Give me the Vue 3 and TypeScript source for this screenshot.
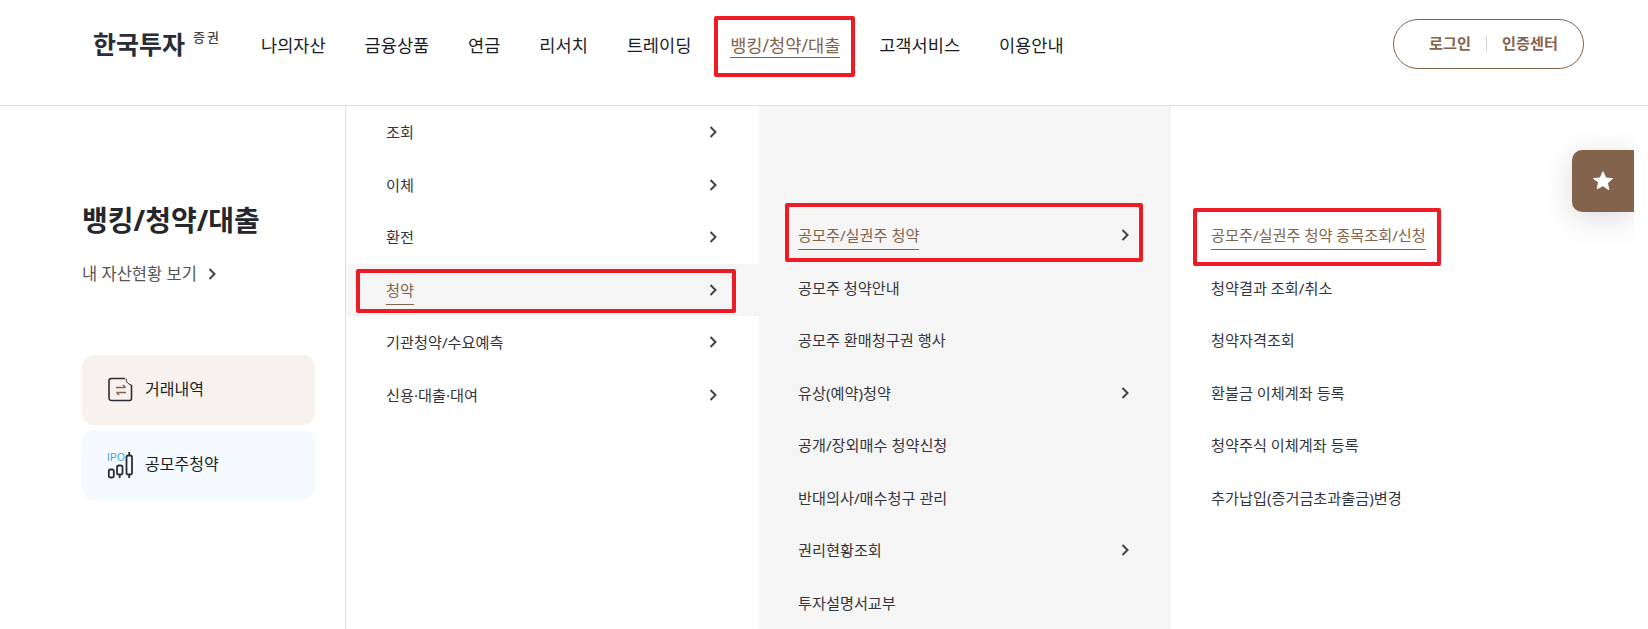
<template>
  <div class="page">
    <!-- 상단 헤더 -->
    <header class="header">
      <div class="logo">한국투자<sup>증권</sup></div>
      <nav class="gnb">
        <a v-for="item in gnbItems" :key="item" class="gnb-item" :class="{ active: item === activeGnb }">
          <span>{{ item }}</span>
          <i v-if="item === activeGnb" class="mark mark-gnb"></i>
        </a>
      </nav>
      <div class="user-box">
        <span>로그인</span>
        <i class="user-sep"></i>
        <span>인증센터</span>
      </div>
    </header>

    <!-- 전체 메뉴 -->
    <main class="menu">
      <aside class="side">
        <h2 class="side-title">뱅킹/청약/대출</h2>
        <a class="side-link">내 자산현황 보기
          <svg class="arrow" width="10" height="12" viewBox="0 0 10 12"><path d="M2.500 1 7.500 6l-5 5" /></svg>
        </a>
        <div class="quick quick-history">
          <svg width="26" height="26" viewBox="0 0 26 26" fill="none">
            <path d="M18 1.500H4.500A2.500 2.500 0 0 0 2 4v17a2.500 2.500 0 0 0 2.500 2.500h18a2 2 0 0 0 2-2V8" stroke="#2b2d36" stroke-width="1.600" />
            <path d="M19 1.800c.3 3.300 1.800 5.300 5.500 6.200" stroke="#2b2d36" stroke-width="1" />
            <path d="M9 10.500h9.500M16 8l2.500 2.500M19 15.500H9.500M12 18l-2.500-2.500" stroke="#84634c" stroke-width="1.600" />
          </svg>
          <span class="quick-text">거래내역</span>
        </div>
        <div class="quick quick-ipo">
          <svg width="26" height="28" viewBox="0 0 26 28" fill="none">
            <text x="0" y="10" class="ipo-text">IPO</text>
            <rect x="1.800" y="18.500" width="5" height="8" rx="1.500" stroke="#2b2d36" stroke-width="1.800" />
            <rect x="10" y="14.500" width="5.500" height="9" rx="1.800" stroke="#2b2d36" stroke-width="1.800" />
            <path d="M12.700 23.500v3.500" stroke="#2b2d36" stroke-width="1.800" />
            <rect x="19.500" y="4.500" width="5.500" height="19" rx="1.800" stroke="#2b2d36" stroke-width="1.800" />
            <path d="M22.200 1v3.500M22.200 23.500V27" stroke="#2b2d36" stroke-width="1.800" />
          </svg>
          <span class="quick-text">공모주청약</span>
        </div>
      </aside>

      <ul class="col col-depth2">
        <li v-for="item in depth2" :key="item.name" class="row" :class="{ selected: item.name === '청약' }">
          <span class="label" :class="{ current: item.name === '청약' }">{{ item.name }}</span>
          <svg v-if="item.more" class="arrow" width="10" height="12" viewBox="0 0 10 12"><path d="M2.500 1 7.500 6l-5 5" /></svg>
          <i v-if="item.name === '청약'" class="mark mark-depth2"></i>
        </li>
      </ul>

      <ul class="col col-depth3">
        <li v-for="(item, idx) in depth3" :key="item.name" class="row">
          <span class="label" :class="{ current: idx === 0 }">{{ item.name }}</span>
          <svg v-if="item.more" class="arrow" width="10" height="12" viewBox="0 0 10 12"><path d="M2.500 1 7.500 6l-5 5" /></svg>
          <i v-if="idx === 0" class="mark mark-depth3"></i>
        </li>
      </ul>

      <ul class="col col-depth4">
        <li v-for="(item, idx) in depth4" :key="item" class="row">
          <span class="label" :class="{ current: idx === 0 }">{{ item }}</span>
          <i v-if="idx === 0" class="mark mark-depth4"></i>
        </li>
      </ul>

      <!-- 즐겨찾기 탭 -->
      <button class="fav" aria-label="즐겨찾기">
        <svg width="22" height="22" viewBox="0 0 24 24"><path d="M12 1.800l3.100 6.800 7.200.8-5.400 4.900 1.500 7.300L12 17.100l-6.400 3.500 1.500-7.300L1.700 9.400l7.200-.8z" fill="#fff" stroke="#fff" stroke-linejoin="round" /></svg>
      </button>
    </main>
  </div>
</template>

<script setup lang="ts">
interface MenuItem {
  name: string
  more: boolean
}

const gnbItems = ['나의자산', '금융상품', '연금', '리서치', '트레이딩', '뱅킹/청약/대출', '고객서비스', '이용안내']
const activeGnb = '뱅킹/청약/대출'

const depth2: MenuItem[] = [
  { name: '조회', more: true },
  { name: '이체', more: true },
  { name: '환전', more: true },
  { name: '청약', more: true },
  { name: '기관청약/수요예측', more: true },
  { name: '신용·대출·대여', more: true }
]

const depth3: MenuItem[] = [
  { name: '공모주/실권주 청약', more: true },
  { name: '공모주 청약안내', more: false },
  { name: '공모주 환매청구권 행사', more: false },
  { name: '유상(예약)청약', more: true },
  { name: '공개/장외매수 청약신청', more: false },
  { name: '반대의사/매수청구 관리', more: false },
  { name: '권리현황조회', more: true },
  { name: '투자설명서교부', more: false }
]

const depth4 = [
  '공모주/실권주 청약 종목조회/신청',
  '청약결과 조회/취소',
  '청약자격조회',
  '환불금 이체계좌 등록',
  '청약주식 이체계좌 등록',
  '추가납입(증거금초과출금)변경'
]
</script>

<style>
html,
body {
  margin: 0;
  background: #fff;
  overflow: hidden;
}
</style>

<style scoped>
.page {
  width: 1648px;
  height: 629px;
  overflow: hidden;
  font-family: "Noto Sans", "Noto Sans CJK KR", sans-serif;
  color: #2b2d36;
  background: #fff;
}

/* 헤더 */
.header {
  height: 106px;
  box-sizing: border-box;
  display: flex;
  align-items: flex-start;
  padding: 0 64px 0 93px;
  border-bottom: 1px solid #e0e0e0;
}

.logo {
  width: 168px;
  margin-top: 27px;
  font-size: 25px;
  font-weight: 700;
  line-height: 34px;
  color: #2b2d36;
  white-space: nowrap;
}

.logo sup {
  margin-left: 8px;
  font-size: 13px;
  font-weight: 500;
  letter-spacing: 2px;
  line-height: 0;
  vertical-align: 12px;
  color: #444;
}

.gnb {
  display: flex;
  flex: 1;
  gap: 38.800px;
  margin-top: 33px;
}

.gnb-item {
  position: relative;
  font-size: 17.600px;
  line-height: 24px;
  font-weight: 400;
  color: #1c1e26;
  white-space: nowrap;
}

.gnb-item.active span {
  color: #84634c;
  border-bottom: 1px solid #84634c;
  padding-bottom: 0;
}

.user-box {
  width: 191px;
  height: 50px;
  margin-top: 19px;
  box-sizing: border-box;
  display: flex;
  align-items: center;
  justify-content: center;
  gap: 15px;
  padding: 0 0 5px 10px;
  border: 1px solid #84634c;
  border-radius: 25px;
  font-size: 15.200px;
  font-weight: 700;
  color: #84634c;
}

.user-sep {
  width: 1px;
  height: 15px;
  margin-top: 4px;
  background: #d9d2cc;
}

/* 메뉴 본문 */
.menu {
  position: relative;
  display: flex;
  height: 523px;
  margin-right: 14px;
  overflow: hidden;
}

.side {
  width: 346px;
  flex: none;
  box-sizing: border-box;
  padding: 95px 0 0 82px;
  border-right: 1px solid #e0e0e0;
}

.side-title {
  margin: 0;
  font-size: 28px;
  line-height: 38px;
  font-weight: 700;
  color: #26272c;
}

.side-link {
  display: flex;
  align-items: center;
  gap: 10px;
  margin-top: 24px;
  font-size: 16.500px;
  line-height: 22px;
  color: #555;
}

.quick {
  width: 233px;
  height: 70px;
  box-sizing: border-box;
  display: flex;
  align-items: center;
  gap: 12px;
  padding-left: 25px;
  border-radius: 12px;
  font-size: 16px;
  color: #1c1e26;
}

.quick-text {
  margin-top: -5px;
}

.quick-history {
  margin-top: 70px;
  background: #f7f2ee;
}

.quick-ipo {
  margin-top: 5px;
  background: #f4fafd;
}

.ipo-text {
  font-family: "Liberation Sans", sans-serif;
  font-size: 10px;
  letter-spacing: 0.3px;
  fill: #30a4ef;
}

.arrow {
  flex: none;
}

.arrow path {
  fill: none;
  stroke: #444;
  stroke-width: 2;
}

/* 메뉴 컬럼 */
.col {
  list-style: none;
  margin: 0;
  padding: 0;
}

.col-depth2 {
  width: 413px;
  flex: none;
}

.col-depth3 {
  width: 412px;
  flex: none;
  box-sizing: border-box;
  padding-top: 103px;
  background: #f5f5f5;
}

.col-depth4 {
  flex: 1;
  padding-top: 103px;
}

.row {
  position: relative;
  height: 52.500px;
  box-sizing: border-box;
  display: flex;
  align-items: center;
  justify-content: space-between;
  font-size: 15.200px;
  color: #33353d;
}

.col-depth2 .row {
  padding: 0 41px 0 40px;
}

.col-depth3 .row {
  padding: 0 41px 0 39px;
}

.col-depth4 .row {
  padding: 0 0 0 40px;
  justify-content: flex-start;
}

.row.selected {
  background: #f5f5f5;
}

.label {
  display: inline-block;
  line-height: 24px;
  white-space: nowrap;
}

.label.current {
  color: #84634c;
  border-bottom: 1px solid #84634c;
  padding-bottom: 2px;
  margin-top: 3px;
}

/* 빨간 강조 박스 */
.mark {
  position: absolute;
  box-sizing: border-box;
  border: 4px solid #ed1c24;
  border-radius: 2px;
  pointer-events: none;
}

.mark-gnb {
  left: -16px;
  right: -15px;
  top: -17px;
  height: 61px;
}

.mark-depth2 {
  left: 10px;
  right: 23px;
  top: 5px;
  height: 44px;
}

.mark-depth3 {
  left: 26px;
  right: 28px;
  top: -6px;
  height: 59px;
}

.mark-depth4 {
  left: 22px;
  width: 248px;
  top: -1px;
  height: 58px;
}

/* 즐겨찾기 */
.fav {
  position: absolute;
  top: 44px;
  right: 0;
  width: 62px;
  height: 62px;
  display: flex;
  align-items: center;
  justify-content: center;
  padding: 0;
  border: 0;
  border-radius: 10px 0 0 10px;
  background: #84634c;
  box-shadow: 0 6px 30px rgba(0, 0, 0, 0.15);
}
</style>
